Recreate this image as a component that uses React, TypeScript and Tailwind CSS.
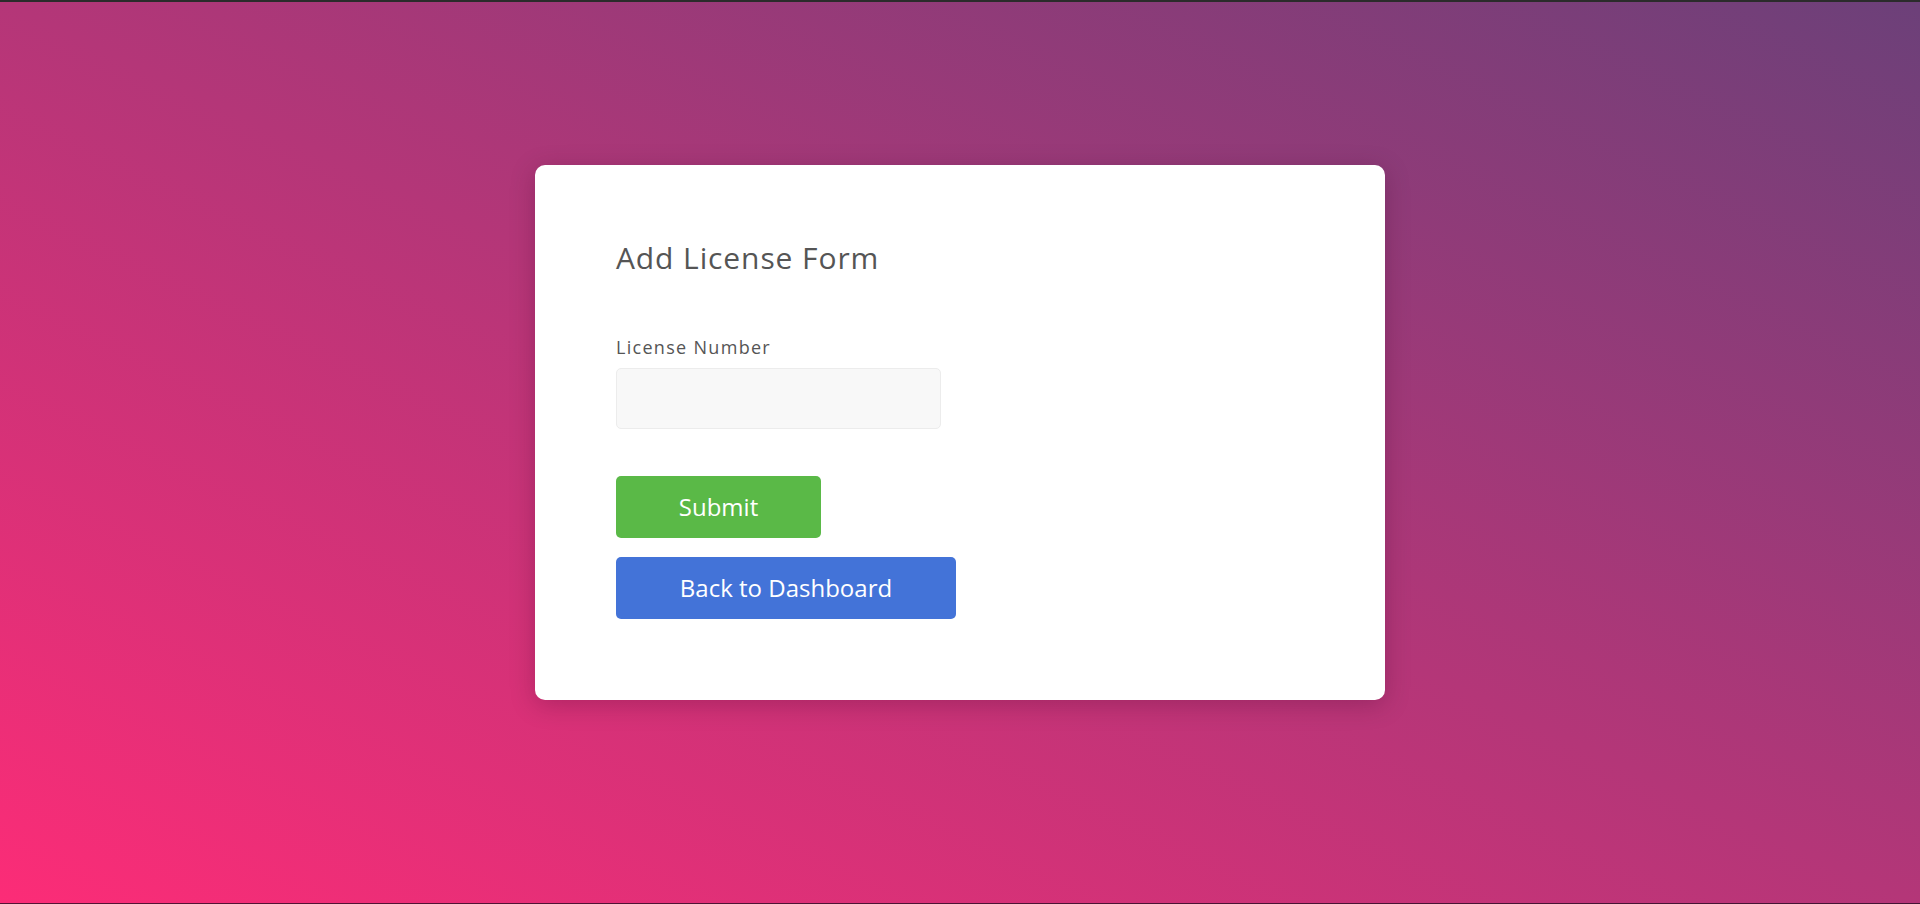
import React from "react";

export default function App() {
  return (
    <div
      className="relative flex h-[904px] w-full flex-col overflow-hidden bg-[linear-gradient(to_top_right,#fc2c77_0%,#6c4079_100%)]"
      style={{ fontFamily: '"Open Sans", "Liberation Sans", sans-serif' }}
    >
      <div className="h-[2px] w-full bg-[#2b2b2b]" />
      <div className="flex justify-center pt-[163px]">
        <div className="flex h-[535px] w-[850px] flex-col rounded-[10px] bg-white pl-[81px] pt-[73px] shadow-[0_5px_25px_rgba(60,0,40,0.25)]">
          <h1 className="text-[30px] leading-[40px] font-normal text-[#555555] tracking-[0.9px]">
            Add License Form
          </h1>
          <label className="mt-[57px] text-[18px] leading-[24px] text-[#555555] tracking-[1.3px]">
            License Number
          </label>
          <input
            type="text"
            className="mt-[9px] h-[61px] w-[325px] rounded-[5px] border border-[#ececec] bg-[#f8f8f8] px-3 outline-none"
          />
          <button className="mt-[47px] h-[62px] w-[205px] rounded-[5px] bg-[#5ab947] text-[24px] leading-none text-white">
            Submit
          </button>
          <button className="mt-[19px] h-[62px] w-[340px] rounded-[5px] bg-[#4373d8] text-[24px] leading-none text-white">
            Back to Dashboard
          </button>
        </div>
      </div>
      <div className="absolute bottom-0 left-0 h-px w-full bg-[rgba(30,10,30,0.75)]" />
    </div>
  );
}
